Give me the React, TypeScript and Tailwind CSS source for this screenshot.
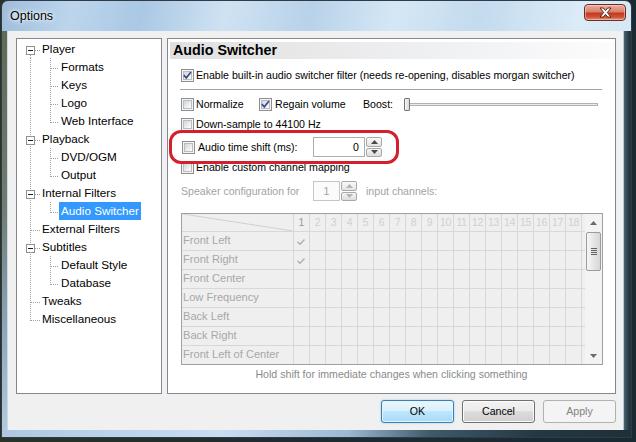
import React from "react";

type TNode = {
  label: string;
  level: 0 | 1;
  box?: boolean;
  first?: boolean;
  last?: boolean;
  lastChild?: boolean;
  selected?: boolean;
};

const tree: TNode[] = [
  { label: "Player", level: 0, box: true, first: true },
  { label: "Formats", level: 1 },
  { label: "Keys", level: 1 },
  { label: "Logo", level: 1 },
  { label: "Web Interface", level: 1, lastChild: true },
  { label: "Playback", level: 0, box: true },
  { label: "DVD/OGM", level: 1 },
  { label: "Output", level: 1, lastChild: true },
  { label: "Internal Filters", level: 0, box: true },
  { label: "Audio Switcher", level: 1, lastChild: true, selected: true },
  { label: "External Filters", level: 0 },
  { label: "Subtitles", level: 0, box: true },
  { label: "Default Style", level: 1 },
  { label: "Database", level: 1, lastChild: true },
  { label: "Tweaks", level: 0 },
  { label: "Miscellaneous", level: 0, last: true },
];

const dot = { stroke: "#a0a0a0", strokeWidth: 1, strokeDasharray: "1 1" };

function Gutter({ n }: { n: TNode }) {
  if (n.level === 0) {
    return (
      <svg width="25" height="18" className="shrink-0">
        <line x1="13.5" y1={n.first ? 15 : 0} x2="13.5" y2={n.last ? 11 : 18} {...dot} />
        <line x1={n.box ? 18 : 14} y1="10.5" x2="24" y2="10.5" {...dot} />
        {n.box && (
          <>
            <rect x="9.5" y="6.5" width="8" height="8" fill="#ffffff" stroke="#919191" />
            <rect x="11" y="10" width="5" height="1" fill="#1e1e1e" />
          </>
        )}
      </svg>
    );
  }
  return (
    <svg width="42" height="18" className="shrink-0">
      <line x1="13.5" y1="0" x2="13.5" y2="18" {...dot} />
      <line x1="33.5" y1="0" x2="33.5" y2={n.lastChild ? 11 : 18} {...dot} />
      <line x1="34" y1="10.5" x2="42" y2="10.5" {...dot} />
    </svg>
  );
}

function Tree() {
  return (
    <div className="flex h-[356px] w-[146px] shrink-0 flex-col border border-[#828790] bg-white pt-[1px]">
      {tree.map((n) => (
        <div key={n.label} className="flex h-[18px] shrink-0 items-center">
          <Gutter n={n} />
          <span
            className={
              n.selected
                ? "flex h-[18px] items-center bg-[#3399ff] px-[2px] text-[11.7px] leading-none text-white"
                : n.level === 1
                ? "flex h-[18px] items-center px-[2px] text-[11.7px] leading-none text-black"
                : "flex h-[18px] items-center text-[11.7px] leading-none text-black"
            }
          >
            {n.label}
          </span>
        </div>
      ))}
    </div>
  );
}

function CheckBox({ checked = false }: { checked?: boolean }) {
  return (
    <span className="flex h-[13px] w-[13px] shrink-0 items-center justify-center border border-[#8e8f8f] bg-[#f4f4f4]">
      <span className="flex h-[9px] w-[9px] items-center justify-center border border-[#b9bcc0] bg-[linear-gradient(135deg,#d2d4d8_0%,#eceef0_60%,#fdfdfd_100%)]">
        {checked && (
          <svg width="9" height="9" viewBox="0 0 9 9" className="overflow-visible">
            <path d="M0.8 4.2 L3.3 6.9 L8 1" fill="none" stroke="#3d5088" strokeWidth="1.7" />
          </svg>
        )}
      </span>
    </span>
  );
}

function Spin({ disabled = false }: { disabled?: boolean }) {
  const arrow = disabled ? "#b4b4b4" : "#4a4a4a";
  return (
    <span className="flex h-[20px] w-[17px] shrink-0 flex-col gap-[1px] pl-[1px]">
      <span className="flex flex-1 items-center justify-center rounded-[2px] border border-[#a9a9a9] bg-[linear-gradient(to_bottom,#fafafa,#e3e3e3)]">
        <svg width="7" height="4">
          <path d="M0 4 L3.5 0 L7 4Z" fill={arrow} />
        </svg>
      </span>
      <span className="flex flex-1 items-center justify-center rounded-[2px] border border-[#a9a9a9] bg-[linear-gradient(to_bottom,#f4f4f4,#dddddd)]">
        <svg width="7" height="4">
          <path d="M0 0 L7 0 L3.5 4Z" fill={arrow} />
        </svg>
      </span>
    </span>
  );
}

const rows = [
  "Front Left",
  "Front Right",
  "Front Center",
  "Low Frequency",
  "Back Left",
  "Back Right",
  "Front Left of Center",
];
const cols = Array.from({ length: 18 }, (_, i) => i + 1);

function Grid() {
  return (
    <div className="flex h-[152px] w-[422px] shrink-0 border border-[#a0a0a0] bg-[#efefef]">
      <div className="flex w-[403px] shrink-0 flex-col overflow-hidden">
        <div className="flex h-[18px] shrink-0 border-b border-[#d8d8d8]">
          <div className="w-[112px] shrink-0 border-r border-[#d8d8d8]">
            <svg width="111" height="17" className="block">
              <line x1="1" y1="0" x2="111" y2="17" stroke="#d0d0d0" />
            </svg>
          </div>
          {cols.map((c) => (
            <div
              key={c}
              className={
                c === 1
                  ? "flex w-[16px] shrink-0 items-center justify-center border-r border-[#d8d8d8] text-[10.5px] leading-none text-[#9a9a9a]"
                  : "flex w-[16px] shrink-0 items-center justify-center border-r border-[#d8d8d8] text-[10.5px] leading-none tracking-[-0.4px] text-[#d0d0d0]"
              }
            >
              {c}
            </div>
          ))}
          <div className="w-[3px] shrink-0" />
        </div>
        {rows.map((r, i) => (
          <div key={r} className="flex h-[19px] shrink-0 border-b border-[#d8d8d8]">
            <div className="flex w-[112px] shrink-0 items-center border-r border-[#d8d8d8] pl-[1px] text-[11.1px] leading-none text-[#a8a8a8]">
              {r}
            </div>
            {cols.map((c) => (
              <div
                key={c}
                className="flex w-[16px] shrink-0 items-center justify-center border-r border-[#d8d8d8]"
              >
                {c === 1 && i < 2 && (
                  <svg width="8" height="6" className="mt-[2px] ml-[-2px]">
                    <path d="M0.5 2.8 L3 5.3 L7.5 0.5" fill="none" stroke="#b0b0b0" strokeWidth="1.4" />
                  </svg>
                )}
              </div>
            ))}
            <div className="w-[3px] shrink-0" />
          </div>
        ))}
      </div>
      <div className="flex w-[17px] shrink-0 flex-col bg-[#f3f3f3]">
        <div className="flex h-[17px] shrink-0 items-center justify-center">
          <svg width="7" height="4">
            <path d="M0 4 L3.5 0 L7 4Z" fill="#6a6a6a" />
          </svg>
        </div>
        <div className="mx-[1px] mt-[1px] flex h-[39px] shrink-0 items-center justify-center rounded-[2px] border border-[#9b9b9b] bg-[linear-gradient(to_right,#f6f6f6,#e6e6e6_50%,#d6d6d6)]">
          <div className="flex flex-col gap-[1px]">
            <div className="h-[1px] w-[6px] bg-[#5f5f5f]" />
            <div className="h-[1px] w-[6px] bg-[#5f5f5f]" />
            <div className="h-[1px] w-[6px] bg-[#5f5f5f]" />
            <div className="h-[1px] w-[6px] bg-[#5f5f5f]" />
          </div>
        </div>
        <div className="flex-1" />
        <div className="flex h-[17px] shrink-0 items-center justify-center">
          <svg width="7" height="4">
            <path d="M0 0 L7 0 L3.5 4Z" fill="#6a6a6a" />
          </svg>
        </div>
      </div>
    </div>
  );
}

function Panel() {
  return (
    <div className="relative flex h-[356px] w-[449px] shrink-0 flex-col border border-[#828790] bg-white">
      <div className="mt-[3px] ml-[2px] mr-[1px] flex h-[17px] items-center bg-[linear-gradient(to_right,#e0e0e0,#f2f3f5_70%,#fcfcfc)] pl-[3px]">
        <span className="text-[14.3px] font-bold leading-none text-black">Audio Switcher</span>
      </div>
      <div className="flex flex-col pl-[13px] text-[10.6px] leading-none text-black">
        <div className="mt-[7px] flex h-[18px] items-center gap-[2px]">
          <CheckBox checked />
          <span>Enable built-in audio switcher filter (needs re-opening, disables morgan switcher)</span>
        </div>
        <div className="ml-[-1px] mt-[5px] h-[1px] w-[422px] bg-[#a3a3a3]" />
        <div className="mt-[5px] flex h-[18px] items-center">
          <div className="flex w-[78px] items-center gap-[2px]">
            <CheckBox />
            <span>Normalize</span>
          </div>
          <div className="flex w-[104px] items-center gap-[3px]">
            <CheckBox checked />
            <span>Regain volume</span>
          </div>
          <span className="w-[41px]">Boost:</span>
          <div className="flex h-[14px] w-[194px] items-center">
            <div className="h-[13px] w-[6px] shrink-0 rounded-[1px] border border-[#747474] bg-[linear-gradient(to_right,#f7f7f7,#d9d9d9)]" />
            <div className="h-[3px] flex-1 border-y border-r border-[#b2b2b2] bg-[#e9ebeb]" />
          </div>
        </div>
        <div className="mt-[2px] flex h-[18px] items-center gap-[2px]">
          <CheckBox />
          <span>Down-sample to 44100 Hz</span>
        </div>
        <div className="mt-[4px] flex h-[20px] items-center">
          <div className="flex w-[132px] items-center gap-[3px] pl-[1px]">
            <CheckBox />
            <span>Audio time shift (ms):</span>
          </div>
          <div className="flex h-[20px] w-[52px] items-center justify-end border border-[#abadb3] bg-white pr-[5px]">
            0
          </div>
          <Spin />
        </div>
        <div className="mt-[1px] flex h-[18px] items-center gap-[2px]">
          <CheckBox />
          <span>Enable custom channel mapping</span>
        </div>
        <div className="mt-[5px] flex h-[20px] items-center text-[#a3a3a3]">
          <span className="w-[132px]">Speaker configuration for</span>
          <div className="flex h-[20px] w-[27px] items-center justify-center border border-[#c4c6ca] bg-[#fbfbfb]">
            1
          </div>
          <Spin disabled />
          <span className="ml-[9px]">input channels:</span>
        </div>
        <div className="mt-[12px]">
          <Grid />
        </div>
      </div>
      <div className="flex h-[18px] items-center justify-center text-[10.6px] leading-none text-[#8a8a8a]">
        Hold shift for immediate changes when clicking something
      </div>
      <div className="absolute left-[1px] top-[91px] h-[34px] w-[230px] rounded-[12px] border-[3px] border-[#d3202c]" />
    </div>
  );
}

function CloseButton() {
  return (
    <div className="mt-[3px] mr-[5px] flex h-[17px] w-[42px] items-center justify-center rounded-[4px] border border-[#6b2b22] bg-[linear-gradient(to_bottom,#eab0a2_0%,#d9806c_45%,#c2391f_55%,#cf5236_80%,#e6927b_100%)] shadow-[inset_0_0_0_1px_rgba(255,220,210,0.5)]">
      <svg width="13" height="11" viewBox="0 0 13 11">
        <path
          d="M1 1 H4.3 L6.5 3.6 L8.7 1 H12 L8.3 5.5 L12 10 H8.7 L6.5 7.4 L4.3 10 H1 L4.7 5.5 Z"
          fill="#ffffff"
          stroke="#4d1a12"
          strokeWidth="0.9"
          strokeLinejoin="round"
        />
      </svg>
    </div>
  );
}

export default function App() {
  return (
    <div className="flex h-[442px] w-[636px] flex-col overflow-hidden bg-[linear-gradient(to_right,#2a3326,#1d2a30_50%,#1a2a33)] pl-[1px] font-['Liberation_Sans',Arial,sans-serif]">
      <div className="flex h-[438px] w-[631px] shrink-0 flex-col overflow-hidden rounded-t-[7px] border border-[#2f3b46] bg-[linear-gradient(100deg,#9fbddb_0%,#bcd5ec_10%,#aac8e4_20%,#cfe2f2_32%,#b8d2ea_44%,#d5e7f5_56%,#c3dbee_68%,#dbebf7_82%,#cfe3f3_100%)]">
        <div className="flex h-[30px] shrink-0 items-start justify-between">
          <span className="ml-[8px] mt-[8px] text-[12.5px] leading-[14px] text-black [text-shadow:0_0_6px_#ffffff,0_0_3px_#ffffff]">
            Options
          </span>
          <CloseButton />
        </div>
        <div className="flex h-[399px] shrink-0">
          <div className="w-[6px] shrink-0 border-r border-[#cbd9e6] bg-[linear-gradient(to_bottom,#5f6a55_0%,#6f7d72_45%,#8ea6bc_75%,#b2c9e0_100%)]" />
          <div className="flex w-[615px] shrink-0 flex-col bg-[#f0f0f0] pl-[8px] pr-[7px] pt-[7px]">
            <div className="flex h-[356px] gap-[5px]">
              <Tree />
              <Panel />
            </div>
            <div className="mt-[6px] flex justify-end gap-[8px] text-[10.6px] leading-none">
              <button className="h-[23px] w-[73px] rounded-[3px] border border-[#3c7fb1] bg-[linear-gradient(to_bottom,#eaf6fd_0%,#d9f0fc_50%,#bee6fd_50%,#a7d9f5_100%)] text-black shadow-[inset_0_0_0_1px_#e4f4fc,0_0_2px_#7fc4ee]">
                OK
              </button>
              <button className="h-[23px] w-[73px] rounded-[3px] border border-[#707070] bg-[linear-gradient(to_bottom,#f2f2f2_0%,#ebebeb_50%,#dddddd_50%,#cfcfcf_100%)] text-black shadow-[inset_0_0_0_1px_#fbfbfb]">
                Cancel
              </button>
              <button className="h-[23px] w-[73px] rounded-[3px] border border-[#adb2b5] bg-[#f4f4f4] text-[#838383]">
                Apply
              </button>
            </div>
          </div>
          <div className="w-[8px] shrink-0 border-l border-[#b6c8d8] bg-[linear-gradient(to_right,#4a6375,#2a3d48_60%,#1f2f38)]" />
        </div>
        <div className="h-[7px] shrink-0 bg-[linear-gradient(to_right,#aec8e2_0%,#c9ddf1_35%,#9cb9d2_55%,#3f5a6a_68%,#243843_85%,#1f2f38_100%)]" />
      </div>
    </div>
  );
}
